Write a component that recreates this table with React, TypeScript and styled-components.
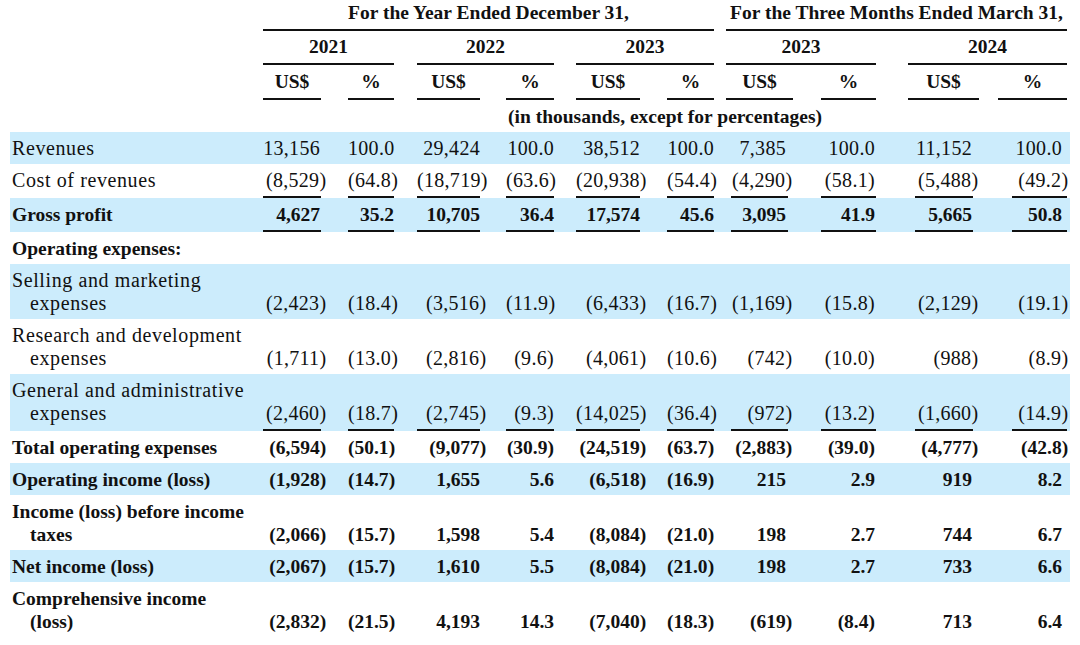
import styled, { createGlobalStyle } from 'styled-components';

const GlobalStyle = createGlobalStyle`
	html,
	body {
		margin: 0;
		padding: 0;
		background: #fff;
	}
	body {
		font-family: 'Liberation Serif', 'Times New Roman', serif;
		color: #111;
	}
`;

// track edges (px, page coords): label 10-263, then ten value columns
const TRACKS = '253px 58px 73px 86px 74px 86px 74px 79px 83px 103px 88px';
const TRACK_EDGES = [263, 321, 394, 480, 554, 640, 714, 793, 876, 979, 1067];

type Col = { head: [number, number]; data: [number, number]; pr: number; hang: boolean };

const COLS: Col[] = [
	{ head: [263, 321], data: [263, 321], pr: 1, hang: true },
	{ head: [348, 394], data: [348, 394], pr: 0, hang: false },
	{ head: [417, 480], data: [417, 480], pr: 0, hang: true },
	{ head: [506, 554], data: [506, 554], pr: 0, hang: false },
	{ head: [576, 640], data: [576, 640], pr: 0, hang: true },
	{ head: [667, 714], data: [667, 714], pr: 0, hang: false },
	{ head: [726, 793], data: [731, 788], pr: 2, hang: true },
	{ head: [821, 876], data: [821, 876], pr: 1, hang: false },
	{ head: [908, 979], data: [915, 973], pr: 1, hang: true },
	{ head: [998, 1067], data: [1012, 1067], pr: 5, hang: true },
];

type Line = {
	label: string[];
	values?: string[];
	band?: boolean;
	bold?: boolean;
	rule?: boolean;
};

const LINES: Line[] = [
	{
		label: ['Revenues'],
		band: true,
		values: ['13,156', '100.0', '29,424', '100.0', '38,512', '100.0', '7,385', '100.0', '11,152', '100.0'],
	},
	{
		label: ['Cost of revenues'],
		rule: true,
		values: ['(8,529)', '(64.8)', '(18,719)', '(63.6)', '(20,938)', '(54.4)', '(4,290)', '(58.1)', '(5,488)', '(49.2)'],
	},
	{
		label: ['Gross profit'],
		band: true,
		bold: true,
		rule: true,
		values: ['4,627', '35.2', '10,705', '36.4', '17,574', '45.6', '3,095', '41.9', '5,665', '50.8'],
	},
	{ label: ['Operating expenses:'], bold: true },
	{
		label: ['Selling and marketing', 'expenses'],
		band: true,
		values: ['(2,423)', '(18.4)', '(3,516)', '(11.9)', '(6,433)', '(16.7)', '(1,169)', '(15.8)', '(2,129)', '(19.1)'],
	},
	{
		label: ['Research and development', 'expenses'],
		values: ['(1,711)', '(13.0)', '(2,816)', '(9.6)', '(4,061)', '(10.6)', '(742)', '(10.0)', '(988)', '(8.9)'],
	},
	{
		label: ['General and administrative', 'expenses'],
		band: true,
		rule: true,
		values: ['(2,460)', '(18.7)', '(2,745)', '(9.3)', '(14,025)', '(36.4)', '(972)', '(13.2)', '(1,660)', '(14.9)'],
	},
	{
		label: ['Total operating expenses'],
		bold: true,
		values: ['(6,594)', '(50.1)', '(9,077)', '(30.9)', '(24,519)', '(63.7)', '(2,883)', '(39.0)', '(4,777)', '(42.8)'],
	},
	{
		label: ['Operating income (loss)'],
		band: true,
		bold: true,
		values: ['(1,928)', '(14.7)', '1,655', '5.6', '(6,518)', '(16.9)', '215', '2.9', '919', '8.2'],
	},
	{
		label: ['Income (loss) before income', 'taxes'],
		bold: true,
		values: ['(2,066)', '(15.7)', '1,598', '5.4', '(8,084)', '(21.0)', '198', '2.7', '744', '6.7'],
	},
	{
		label: ['Net income (loss)'],
		band: true,
		bold: true,
		values: ['(2,067)', '(15.7)', '1,610', '5.5', '(8,084)', '(21.0)', '198', '2.7', '733', '6.6'],
	},
	{
		label: ['Comprehensive income', '(loss)'],
		bold: true,
		values: ['(2,832)', '(21.5)', '4,193', '14.3', '(7,040)', '(18.3)', '(619)', '(8.4)', '713', '6.4'],
	},
];

const Sheet = styled.div`
	padding: 0 3px 0 10px;
	width: 1057px;
	line-height: 23px;
`;

const HeadRow = styled.div<{ $pt: number; $pb?: number }>`
	display: grid;
	grid-template-columns: ${TRACKS};
	padding-top: ${(p) => p.$pt}px;
	padding-bottom: ${(p) => p.$pb ?? 0}px;
	align-items: end;
`;

const HeadCell = styled.div<{ $from: number; $to: number; $ml: number; $mr: number; $rule?: boolean }>`
	grid-column: ${(p) => p.$from} / ${(p) => p.$to};
	margin-left: ${(p) => p.$ml}px;
	margin-right: ${(p) => p.$mr}px;
	text-align: center;
	font-size: 19.5px;
	font-weight: 700;
	white-space: nowrap;
	padding-bottom: ${(p) => (p.$rule ? '5px' : '0')};
	border-bottom: ${(p) => (p.$rule ? '2px solid #111' : 'none')};
`;

const DataRow = styled.div<{ $band?: boolean; $rule?: boolean }>`
	display: grid;
	grid-template-columns: ${TRACKS};
	align-items: last baseline;
	padding: 5px 3px ${(p) => (p.$rule ? 0 : 4)}px 0;
	margin-right: -3px;
	background: ${(p) => (p.$band ? '#ccecfc' : 'transparent')};
`;

const Label = styled.div<{ $bold?: boolean }>`
	padding-left: 2px;
	font-size: ${(p) => (p.$bold ? '19.5px' : '20px')};
	font-weight: ${(p) => (p.$bold ? 700 : 400)};
	letter-spacing: ${(p) => (p.$bold ? '0' : '0.6px')};
	white-space: nowrap;
`;

const Indent = styled.div`
	padding-left: 18px;
`;

const Num = styled.div<{ $ml: number; $mr: number; $pr: number; $bold?: boolean; $rule?: boolean }>`
	margin-left: ${(p) => p.$ml}px;
	margin-right: ${(p) => p.$mr}px;
	padding-right: ${(p) => p.$pr}px;
	text-align: right;
	white-space: nowrap;
	font-size: ${(p) => (p.$bold ? '19.5px' : '20px')};
	font-weight: ${(p) => (p.$bold ? 700 : 400)};
	letter-spacing: ${(p) => (p.$bold ? '0' : '0.3px')};
	padding-bottom: ${(p) => (p.$rule ? '4px' : '0')};
	border-bottom: ${(p) => (p.$rule ? '2px solid #111' : 'none')};
`;

const Paren = styled.span<{ $hang: boolean }>`
	margin-right: ${(p) => (p.$hang ? '-0.32em' : '0')};
`;

function headSpan(first: number, last: number) {
	const start = COLS[first].head[0];
	const end = COLS[last].head[1];
	return {
		$from: first + 2,
		$to: last + 3,
		$ml: start - TRACK_EDGES[first],
		$mr: TRACK_EDGES[last + 1] - end,
	};
}

function Value({ text, col, bold, rule }: { text: string; col: number; bold?: boolean; rule?: boolean }) {
	const c = COLS[col];
	const neg = text.endsWith(')');
	return (
		<Num
			$ml={c.data[0] - TRACK_EDGES[col]}
			$mr={TRACK_EDGES[col + 1] - c.data[1]}
			$pr={c.pr}
			$bold={bold}
			$rule={rule}
		>
			{neg ? text.slice(0, -1) : text}
			{neg && <Paren $hang={c.hang}>)</Paren>}
		</Num>
	);
}

const years: [number, number, string][] = [
	[0, 1, '2021'],
	[2, 3, '2022'],
	[4, 5, '2023'],
	[6, 7, '2023'],
	[8, 9, '2024'],
];

export default function App() {
	return (
		<>
			<GlobalStyle />
			<Sheet>
				<HeadRow $pt={1}>
					<HeadCell {...headSpan(0, 5)} $rule>
						For the Year Ended December 31,
					</HeadCell>
					<HeadCell {...headSpan(6, 9)} $rule>
						For the Three Months Ended March 31,
					</HeadCell>
				</HeadRow>
				<HeadRow $pt={4}>
					{years.map(([a, b, y], i) => (
						<HeadCell key={i} {...headSpan(a, b)} $rule>
							{y}
						</HeadCell>
					))}
				</HeadRow>
				<HeadRow $pt={5}>
					{COLS.map((_, i) => (
						<HeadCell key={i} {...headSpan(i, i)} $rule>
							{i % 2 === 0 ? 'US$' : '%'}
						</HeadCell>
					))}
				</HeadRow>
				<HeadRow $pt={5} $pb={4}>
					<HeadCell $from={2} $to={12} $ml={0} $mr={0}>
						(in thousands, except for percentages)
					</HeadCell>
				</HeadRow>
				{LINES.map((line, i) => (
					<DataRow key={i} $band={line.band} $rule={line.rule}>
						<Label $bold={line.bold}>
							{line.label[0]}
							{line.label[1] && <Indent>{line.label[1]}</Indent>}
						</Label>
						{line.values?.map((v, j) => (
							<Value key={j} text={v} col={j} bold={line.bold} rule={line.rule} />
						))}
					</DataRow>
				))}
			</Sheet>
		</>
	);
}
